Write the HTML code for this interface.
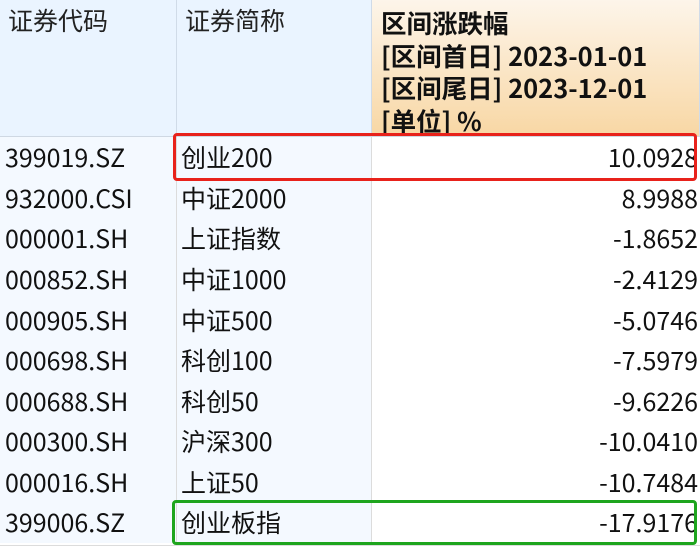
<!DOCTYPE html>
<html><head><meta charset="utf-8"><style>
*{margin:0;padding:0;box-sizing:border-box}
body{width:700px;height:546px;overflow:hidden;background:#fff;font-family:"Noto Sans CJK SC","Liberation Sans",sans-serif;color:#111;position:relative}
.c{position:absolute;font-size:25px;line-height:40px;white-space:nowrap;overflow:hidden}
.h{position:absolute;top:0;height:137px;border-right:1px solid #d0dbe8;border-bottom:1px solid #cfd8e3}
.row{position:absolute;left:0;width:700px;height:41px;border-bottom:1px solid #dcdcdc}
.a{left:0;width:177px;background:#f4f9ff;border-right:1px solid #dcdcdc;padding-left:5px;height:41px;top:0}
.b{left:177px;width:195px;background:#f4f9ff;border-right:1px solid #dcdcdc;padding-left:4px;height:41px;top:0}
.v{left:372px;width:328px;text-align:right;padding-right:2px;height:41px;top:0;background:#fff}
</style></head><body>
<div class="h" style="left:0;width:177px;background:#eaf4ff"></div>
<div class="h" style="left:177px;width:195px;background:#eaf4ff"></div>
<div class="h" style="left:372px;width:328px;background:linear-gradient(#fdf5ea,#f8d7a4)"></div>
<div class="c" style="left:8px;top:3px;line-height:34px;color:#222">证券代码</div>
<div class="c" style="left:185px;top:3px;line-height:34px;color:#222">证券简称</div>
<div style="position:absolute;left:381px;top:7px;width:319px;height:129px;overflow:hidden;font-weight:bold;font-size:25.5px;line-height:32.7px;color:#111">区间涨跌幅<br>[区间首日] 2023-01-01<br>[区间尾日] 2023-12-01<br>[单位] %</div>

<div class="row" style="top:137px"><div class="c a">399019.SZ</div><div class="c b">创业200</div><div class="c v">10.0928</div></div>
<div class="row" style="top:178px"><div class="c a">932000.CSI</div><div class="c b">中证2000</div><div class="c v">8.9988</div></div>
<div class="row" style="top:218px"><div class="c a">000001.SH</div><div class="c b">上证指数</div><div class="c v">-1.8652</div></div>
<div class="row" style="top:259px"><div class="c a">000852.SH</div><div class="c b">中证1000</div><div class="c v">-2.4129</div></div>
<div class="row" style="top:300px"><div class="c a">000905.SH</div><div class="c b">中证500</div><div class="c v">-5.0746</div></div>
<div class="row" style="top:340px"><div class="c a">000698.SH</div><div class="c b">科创100</div><div class="c v">-7.5979</div></div>
<div class="row" style="top:381px"><div class="c a">000688.SH</div><div class="c b">科创50</div><div class="c v">-9.6226</div></div>
<div class="row" style="top:421px"><div class="c a">000300.SH</div><div class="c b">沪深300</div><div class="c v">-10.0410</div></div>
<div class="row" style="top:462px"><div class="c a">000016.SH</div><div class="c b">上证50</div><div class="c v">-10.7484</div></div>
<div class="row" style="top:502px;height:44px"><div class="c a">399006.SZ</div><div class="c b">创业板指</div><div class="c v">-17.9176</div></div>

<div style="position:absolute;left:173px;top:133px;width:524px;height:48px;border:3px solid #e8221b;border-radius:4px"></div>
<div style="position:absolute;left:172px;top:500px;width:525px;height:45px;border:3px solid #1ea51e;border-radius:4px"></div>
</body></html>
